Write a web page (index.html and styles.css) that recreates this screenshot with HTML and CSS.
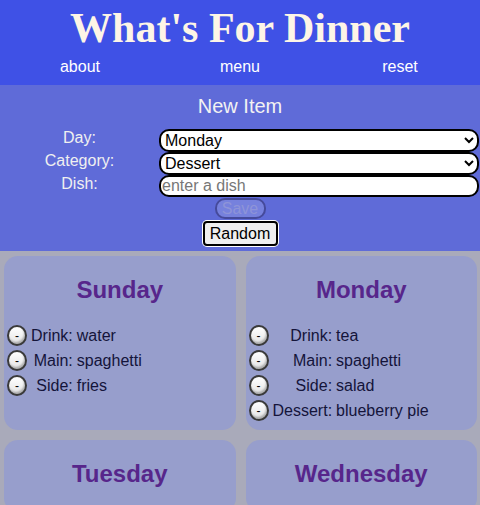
FILE: index.html
```html
<!DOCTYPE html>
<html lang="en">

<head>
    <meta charset="UTF-8">
    <meta name="viewport" content="width=device-width, initial-scale=1.0">
    <title>What's For Dinner</title>
    <link rel="stylesheet" href="styles.css">
</head>

<body>
<!-- header -->
<header class="top">
    <h1 class="title">What's For Dinner</h1>
    <nav class="nav">
        <a href="#">about</a>
        <a href="#">menu</a>
        <a href="#">reset</a>
    </nav>
</header>

<!-- new item form -->
<section class="new-item">
    <h2 class="new-item-title">New Item</h2>
    <form class="item-form">
        <label for="day">Day:</label>
        <select id="day">
            <option>Sunday</option>
            <option selected>Monday</option>
            <option>Tuesday</option>
            <option>Wednesday</option>
        </select>
        <label for="category">Category:</label>
        <select id="category">
            <option>Drink</option>
            <option>Main</option>
            <option>Side</option>
            <option selected>Dessert</option>
        </select>
        <label for="dish">Dish:</label>
        <input type="text" id="dish" placeholder="enter a dish">
    </form>
    <div class="actions">
        <button class="save" disabled>Save</button>
        <button class="random">Random</button>
    </div>
</section>

<!-- week -->
<main class="week">
    <div class="day">
        <h2>Sunday</h2>
        <table class="meals">
            <tr><td><button class="remove">-</button></td><td class="cat">Drink:</td><td>water</td></tr>
            <tr><td><button class="remove">-</button></td><td class="cat">Main:</td><td>spaghetti</td></tr>
            <tr><td><button class="remove">-</button></td><td class="cat">Side:</td><td>fries</td></tr>
        </table>
    </div>
    <div class="day">
        <h2>Monday</h2>
        <table class="meals">
            <tr><td><button class="remove">-</button></td><td class="cat">Drink:</td><td>tea</td></tr>
            <tr><td><button class="remove">-</button></td><td class="cat">Main:</td><td>spaghetti</td></tr>
            <tr><td><button class="remove">-</button></td><td class="cat">Side:</td><td>salad</td></tr>
            <tr><td><button class="remove">-</button></td><td class="cat">Dessert:</td><td>blueberry pie</td></tr>
        </table>
    </div>
    <div class="day">
        <h2>Tuesday</h2>
        <table class="meals"></table>
    </div>
    <div class="day">
        <h2>Wednesday</h2>
        <table class="meals"></table>
    </div>
</main>
</body>

</html>
```

FILE: styles.css
```css
body {
    font-family: "Liberation Sans", Arial, sans-serif;
    font-size: 16px;
    margin: 0;
    padding: 0;
    background-color: #a9aaba;
}

/* header */
.top {
    background-color: #3f51e6;
    padding: 4px 0 9px;
}

.title {
    margin: 0;
    font-family: "Liberation Serif", "Times New Roman", serif;
    font-size: 42px;
    line-height: 48px;
    text-align: center;
    color: #fdf5e6;
}

.nav {
    display: flex;
    margin-top: 6px;
    line-height: 18px;
}

.nav a {
    flex: 1;
    text-align: center;
    color: #fff;
    text-decoration: none;
}

/* new item form */
.new-item {
    background-color: #5f6bd8;
    padding: 10px 0 5px;
}

.new-item-title {
    margin: 0 0 11px;
    font-size: 20px;
    font-weight: normal;
    line-height: 23px;
    text-align: center;
    color: #f2f2f2;
}

.item-form {
    display: grid;
    grid-template-columns: 159px 1fr;
    padding-right: 1px;
}

.item-form label {
    align-self: start;
    text-align: center;
    color: #f0f0f0;
    line-height: 18px;
}

.item-form select,
.item-form input {
    box-sizing: border-box;
    width: 100%;
    height: 23px;
    margin: 0;
    border: 2px solid #000;
    border-radius: 10px;
    background-color: #fff;
    font-family: inherit;
    font-size: 16px;
    color: #000;
}

.item-form input {
    height: 22px;
    padding: 0 1px;
}

.item-form input::placeholder {
    color: #777;
}

.actions {
    display: flex;
    flex-direction: column;
    align-items: center;
    gap: 2px;
    margin-top: 1px;
}

.actions button {
    font-family: inherit;
    font-size: 16px;
    box-sizing: border-box;
}

.save {
    height: 21px;
    width: 51px;
    padding: 0;
    border: 2px solid rgba(30, 30, 100, 0.55);
    border-radius: 10px;
    background-color: rgba(255, 255, 255, 0.15);
    color: #8e94d8;
    line-height: 16px;
}

.random {
    height: 25px;
    width: 75px;
    padding: 0;
    border: 2px solid #000;
    border-radius: 4px;
    background-color: #efefef;
    color: #000;
    box-shadow: 0 0 0 1px #fff;
}

/* week grid */
.week {
    display: grid;
    grid-template-columns: 1fr 1fr;
    gap: 10px;
    padding: 5px 3px 4px 4px;
}

.day {
    background-color: #979ecc;
    border-radius: 14px;
    padding-bottom: 6px;
    min-height: 60px;
}

.day h2 {
    margin: 20px 0 18px;
    font-size: 24px;
    line-height: 28px;
    text-align: center;
    color: #57268b;
}

.meals {
    border-spacing: 2px;
    color: #14143a;
}

.meals td {
    padding: 1px;
    line-height: 18px;
    vertical-align: middle;
}

.meals .cat {
    text-align: right;
}

.remove {
    display: block;
    box-sizing: border-box;
    width: 20px;
    height: 21px;
    padding: 0;
    border: 2px solid #3a3a3a;
    border-radius: 50%;
    background: linear-gradient(#fff, #e4e4e4);
    box-shadow: inset -1px -2px 2px rgba(0, 0, 0, 0.25);
    font-family: inherit;
    font-size: 12px;
    line-height: 14px;
    color: #000;
}
```
